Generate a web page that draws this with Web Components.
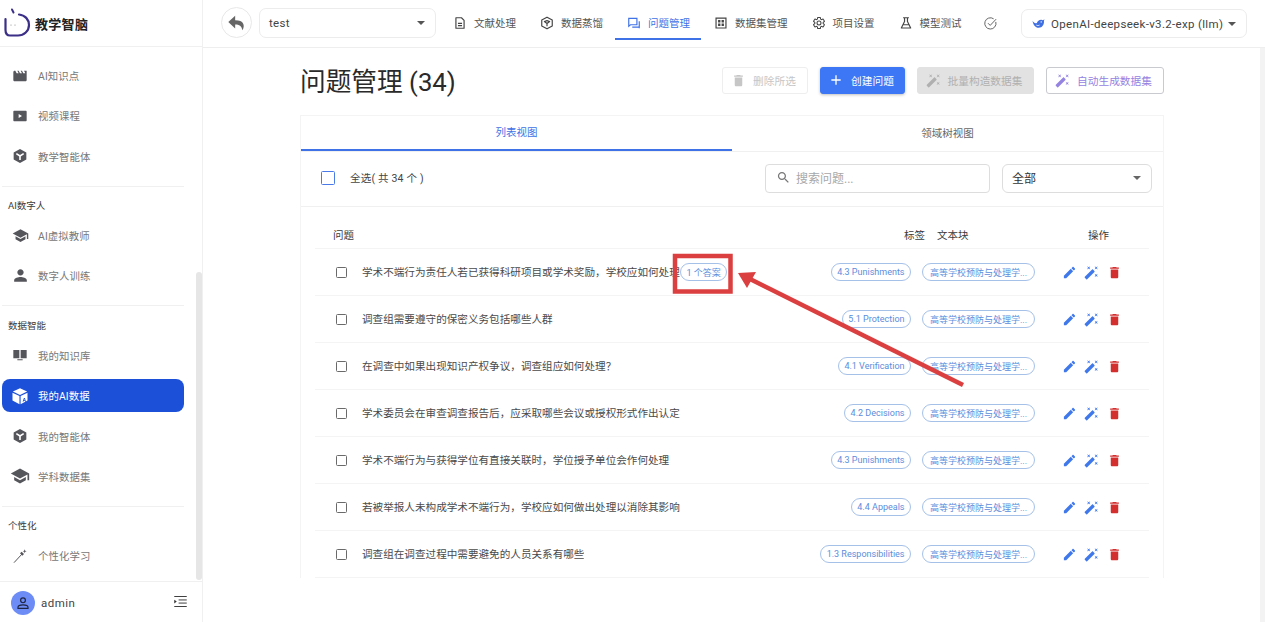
<!DOCTYPE html>
<html lang="zh">
<head>
<meta charset="utf-8">
<title>问题管理</title>
<style>
  html, body { margin: 0; height: 100%; overflow: hidden; background: #fff; }
  body { font-family: Roboto, "Noto Sans CJK SC", sans-serif; color: #2b2b2b; }
</style>
</head>
<body>
<app-shell>
  <side-bar slot="side"></side-bar>
  <top-bar slot="top"></top-bar>
  <question-page slot="main"></question-page>
</app-shell>
<red-marks></red-marks>

<script>
// all icons in one place, 24x24 box
const ICONS = {
  clap: '<path fill="currentColor" d="M18 4l2 4h-3l-2-4h-2l2 4h-3l-2-4H8l2 4H7L5 4H4c-1.1 0-2 .9-2 2v12c0 1.100.9 2 2 2h16c1.100 0 2-.9 2-2V4z"/>',
  video: '<path fill="currentColor" fill-rule="evenodd" d="M3.500 4h17c.8 0 1.500.7 1.500 1.500v13c0 .8-.7 1.500-1.500 1.500h-17C2.700 20 2 19.300 2 18.500v-13C2 4.700 2.700 4 3.500 4zM10 9v6l5-3z"/>',
  agent: '<path fill="currentColor" d="M12 1.500l9.500 5.300v10.400L12 22.500l-9.500-5.300V6.800z"/><path fill="none" stroke="#fff" stroke-width="2.400" d="M6.500 8.500L12 12l5.500-3.500M12 12v6"/>',
  school: '<path fill="currentColor" d="M5 13.180v4L12 21l7-3.820v-4L12 17l-7-3.820zM12 3L1 9l11 6 9-4.910V17h2V9L12 3z"/>',
  person: '<path fill="currentColor" d="M12 12c2.210 0 4-1.790 4-4s-1.790-4-4-4-4 1.790-4 4 1.790 4 4 4zm0 2c-2.670 0-8 1.340-8 4v2h16v-2c0-2.660-5.330-4-8-4z"/>',
  book: '<path fill="currentColor" d="M2 4.500h9V17H2zM13 4.500h9V17h-9zM8 18.500h8V20H8z"/>',
  cube: '<path fill="#fff" d="M12 1.500l9.500 4.600L12 10.800 2.500 6.100zM2 7.500l9.300 4.600V23L2 18zM12.800 12.100L22 7.500V18l-9.200 5z"/><path fill="#1c50d8" d="M15.500 19.500l1.700-5h1.300l1.500 5h-1.200l-.3-1h-1.700l-.3 1zm1.800-2h1.100l-.5-1.700z"/>',
  wandThin: '<path fill="none" stroke="currentColor" stroke-width="1.500" d="M3 22L16 8"/><path fill="currentColor" d="M14.500 5.500l3.500 3.500-2.500 2.500L12 8zM19 2l.8 2.200L22 5l-2.200.8L19 8l-.8-2.200L16 5l2.200-.8z"/>',
  wand: '<path fill="currentColor" d="M7.500 5.600L10 7 8.600 4.500 10 2 7.500 3.400 5 2l1.400 2.500L5 7zm12 9.800L17 14l1.400 2.500L17 19l2.500-1.400L22 19l-1.400-2.500L22 14zM22 2l-2.500 1.400L17 2l1.400 2.500L17 7l2.500-1.400L22 7l-1.400-2.500zm-7.630 5.290c-.39-.39-1.020-.39-1.410 0L1.290 18.960c-.39.39-.39 1.020 0 1.410l2.340 2.340c.39.39 1.020.39 1.410 0L16.700 11.050c.39-.39.39-1.020 0-1.410l-2.330-2.350z"/>',
  edit: '<path fill="currentColor" d="M3 17.250V21h3.750L17.810 9.940l-3.750-3.750L3 17.250zM20.710 7.040c.39-.39.39-1.020 0-1.410l-2.340-2.340c-.39-.39-1.020-.39-1.410 0l-1.830 1.830 3.750 3.750 1.830-1.830z"/>',
  trash: '<path fill="currentColor" d="M6 19c0 1.100.9 2 2 2h8c1.100 0 2-.9 2-2V7H6v12zM19 4h-3.500l-1-1h-5l-1 1H5v2h14V4z"/>',
  search: '<path fill="currentColor" d="M15.500 14h-.79l-.28-.27C15.410 12.590 16 11.110 16 9.500 16 5.910 13.090 3 9.500 3S3 5.910 3 9.500 5.910 16 9.500 16c1.610 0 3.090-.59 4.230-1.570l.27.28v.79l5 4.990L20.490 19l-4.990-5zm-6 0C7.010 14 5 11.990 5 9.500S7.010 5 9.500 5 14 7.010 14 9.500 11.990 14 9.500 14z"/>',
  add: '<path fill="currentColor" d="M19 13h-6v6h-2v-6H5v-2h6V5h2v6h6v2z"/>',
  back: '<path fill="currentColor" d="M10 9V4L2.500 11 10 18v-4.500c4.500 0 7 1.500 8 6.500 3-5.500 1.500-11-8-11z"/>',
  doc: '<path fill="none" stroke="currentColor" stroke-width="2" stroke-linejoin="round" d="M5 3h9.500L19 7.500V21H5z"/><path fill="none" stroke="currentColor" stroke-width="2" d="M8.500 12.500h7M8.500 16.500h7"/>',
  distill: '<path fill="none" stroke="currentColor" stroke-width="2" stroke-linejoin="round" d="M12 2l9 5v10l-9 5-9-5V7z"/><path fill="none" stroke="currentColor" stroke-width="2" stroke-linejoin="round" d="M7.500 9.500L12 8l4.500 1.500L12 13zM12 13v4.500"/>',
  chat: '<path fill="none" stroke="currentColor" stroke-width="2" d="M3 4h14v11H6l-3 2.500z"/><path fill="none" stroke="currentColor" stroke-width="2" d="M21 9v12M9 19h12"/>',
  grid: '<path fill="none" stroke="currentColor" stroke-width="2" d="M3.500 3.500h17v17h-17z"/><path fill="currentColor" d="M7 7h4v4H7zM13 7h4v4h-4zM7 13h4v4H7zM13 13h4v4h-4z"/>',
  gear: '<path fill="none" stroke="currentColor" stroke-width="1.800" d="M19.140 12.940c.04-.3.06-.61.06-.94 0-.32-.02-.64-.07-.94l2.030-1.580c.18-.14.23-.41.12-.61l-1.920-3.320c-.12-.22-.37-.29-.59-.22l-2.390.96c-.5-.38-1.030-.7-1.620-.94l-.36-2.540c-.04-.24-.24-.41-.48-.41h-3.840c-.24 0-.43.17-.47.41l-.36 2.540c-.59.24-1.130.57-1.620.94l-2.390-.96c-.22-.08-.47 0-.59.22L2.740 8.870c-.12.21-.08.47.12.61l2.030 1.580c-.05.3-.09.63-.09.94s.02.64.07.94l-2.030 1.580c-.18.14-.23.41-.12.61l1.920 3.320c.12.22.37.29.59.22l2.390-.96c.5.38 1.030.7 1.620.94l.36 2.540c.05.24.24.41.48.41h3.840c.24 0 .44-.17.47-.41l.36-2.540c.59-.24 1.130-.56 1.620-.94l2.390.96c.22.08.47 0 .59-.22l1.920-3.320c.12-.22.07-.47-.12-.61z"/><circle cx="12" cy="12" r="3.400" fill="none" stroke="currentColor" stroke-width="1.800"/>',
  flask: '<path fill="none" stroke="currentColor" stroke-width="2" stroke-linejoin="round" d="M7 3h10M9.500 3v6.500L4 20.500h16L14.500 9.500V3M7 15h10"/>',
  check: '<path fill="none" stroke="currentColor" stroke-width="1.600" d="M20.500 9.500A9 9 0 1 1 17 4.500"/><path fill="none" stroke="currentColor" stroke-width="1.600" d="M8 11.500l3.500 3.500L21 5"/>',
  whale: '<path fill="#3f6fe0" d="M1 7c2 4 5 5 8 4 1-3 4-6 8-6 1.200 0 2.300.4 3.200 1L23 4l-1 3.500c1 5.500-3 12.500-9.500 12.500C6 20 2 14 1 7z"/><circle cx="17" cy="9" r="1.300" fill="#fff"/><path fill="none" stroke="#fff" stroke-width="1.500" d="M8 15c2 1 4 1 6 0"/>',
  user: '<circle cx="12" cy="8" r="3.600" fill="none" stroke="#1f2540" stroke-width="1.800"/><path fill="none" stroke="#1f2540" stroke-width="1.800" d="M4.500 20v-1.500c0-2.500 3.500-3.700 7.500-3.700s7.500 1.200 7.500 3.700V20z"/>',
  collapse: '<path fill="none" stroke="currentColor" stroke-width="1.500" d="M2 4h20M9 9.500h13M9 14.500h13M2 20h20"/><path fill="currentColor" d="M2 9l4 3-4 3z"/>'
};

class UiIcon extends HTMLElement {
  connectedCallback() {
    const size = this.getAttribute('size') || 16;
    this.attachShadow({ mode: 'open' }).innerHTML = `
      <style>:host{display:inline-flex;flex:none;width:${size}px;height:${size}px} svg{width:100%;height:100%;display:block}</style>
      <svg viewBox="0 0 24 24">${ICONS[this.getAttribute('name')] || ''}</svg>`;
  }
}
customElements.define('ui-icon', UiIcon);

class AppShell extends HTMLElement {
  constructor() {
    super();
    this.attachShadow({ mode: 'open' }).innerHTML = `
      <style>
        :host{display:grid;grid-template-columns:203px 1fr;grid-template-rows:48px 1fr;height:622px;overflow:hidden}
        .side{grid-row:1 / 3;min-height:0;display:flex}
        .top{min-width:0}
        .main{min-height:0;overflow:hidden;position:relative}
        /* page scrollbar, very faint */
        .main::after{content:"";position:absolute;top:0;right:0;bottom:0;width:5px;background:#f3f3f3}
      </style>
      <div class="side"><slot name="side"></slot></div>
      <div class="top"><slot name="top"></slot></div>
      <div class="main"><slot name="main"></slot></div>`;
  }
}
customElements.define('app-shell', AppShell);

class NavItem extends HTMLElement {
  connectedCallback() {
    const on = this.hasAttribute('active');
    this.attachShadow({ mode: 'open' }).innerHTML = `
      <style>
        :host{display:flex;align-items:center;height:33px;margin-bottom:7.4px;border-radius:8px;
          padding-left:10px;font-size:10.4px;letter-spacing:.1px;
          color:${on ? '#fff' : '#777'};background:${on ? '#1c50d8' : 'transparent'}}
        .ic{display:flex;width:16px;justify-content:center;margin-right:10px;color:${on ? '#fff' : '#55555c'}}
      </style>
      <span class="ic"><ui-icon name="${this.getAttribute('icon')}" size="${this.getAttribute('size') || 16}"></ui-icon></span>
      <slot></slot>`;
  }
}
customElements.define('nav-item', NavItem);

class NavGroup extends HTMLElement {
  connectedCallback() {
    const label = this.getAttribute('label');
    const last = this.hasAttribute('last');
    this.attachShadow({ mode: 'open' }).innerHTML = `
      <style>
        :host{display:block}
        .label{font-size:9.500px;line-height:12px;color:#3a3a3a;padding-left:6px;margin-bottom:7px}
        hr{border:0;border-top:1px solid #f0f0f0;margin:13px 0 13.300px}
      </style>
      ${label ? `<div class="label">${label}</div>` : ''}
      <slot></slot>
      ${last ? '' : '<hr>'}`;
  }
}
customElements.define('nav-group', NavGroup);

class SideBar extends HTMLElement {
  constructor() {
    super();
    this.attachShadow({ mode: 'open' }).innerHTML = `
      <style>
        :host{display:flex;flex-direction:column;width:203px;height:622px;box-sizing:border-box;border-right:1px solid #f0f0f0;position:relative}
        .logo{height:47px;flex:none;box-sizing:border-box;border-bottom:1px solid #f0f0f0;display:flex;align-items:center;padding-left:2px;
          font-size:13px;font-weight:700;color:#222;letter-spacing:.3px}
        .logo svg{width:29px;height:30px;margin-right:4px;margin-top:-1px}
        nav{flex:1;padding:12px 18px 0 2px;overflow:hidden}
        .thumb{position:absolute;left:196px;top:272px;width:6px;height:308px;background:#e6e6e6;border-radius:3px}
        footer{height:41px;flex:none;box-sizing:border-box;padding:1px 14px 0 11px;border-top:1px solid #f0f0f0;display:flex;align-items:center;
          font-size:11.500px;letter-spacing:.5px;color:#444;background:#fff;position:relative}
        .av{width:24px;height:24px;border-radius:50%;background:#6d8cf6;display:flex;align-items:center;justify-content:center;margin-right:6px}
        .col{margin-left:auto;color:#333}
      </style>
      <div class="logo">
        <svg viewBox="0 0 29 30">
          <path fill="none" stroke="#3b2f88" stroke-width="2.200" stroke-linecap="round" d="M17 6.500C23 7 27 11.500 27 17c0 6-5 10.500-11 10.500H8C5 27.500 3.500 25 3.500 22V11"/>
          <path fill="none" stroke="#3b2f88" stroke-width="2" stroke-linecap="round" d="M10 1.500l1.500 3"/>
          <circle cx="9" cy="17" r=".6" fill="#888"/><circle cx="13" cy="17" r=".6" fill="#888"/>
        </svg>教学智脑
      </div>
      <nav>
        <nav-group>
          <nav-item icon="clap">AI知识点</nav-item>
          <nav-item icon="video">视频课程</nav-item>
          <nav-item icon="agent">教学智能体</nav-item>
        </nav-group>
        <nav-group label="AI数字人">
          <nav-item icon="school" size="17">AI虚拟教师</nav-item>
          <nav-item icon="person" size="19">数字人训练</nav-item>
        </nav-group>
        <nav-group label="数据智能">
          <nav-item icon="book">我的知识库</nav-item>
          <nav-item icon="cube" size="18" active>我的AI数据</nav-item>
          <nav-item icon="agent">我的智能体</nav-item>
          <nav-item icon="school" size="20">学科数据集</nav-item>
        </nav-group>
        <nav-group label="个性化" last>
          <nav-item icon="wandThin">个性化学习</nav-item>
        </nav-group>
      </nav>
      <div class="thumb"></div>
      <footer>
        <span class="av"><ui-icon name="user" size="16"></ui-icon></span>admin
        <span class="col"><ui-icon name="collapse" size="15"></ui-icon></span>
      </footer>`;
  }
}
customElements.define('side-bar', SideBar);

class TopTab extends HTMLElement {
  connectedCallback() {
    const on = this.hasAttribute('active');
    this.attachShadow({ mode: 'open' }).innerHTML = `
      <style>
        :host{display:flex;align-items:center;height:33px;margin-top:7px;padding:0 11px 0 12px;margin-right:1px;box-sizing:border-box;
          font-size:10.500px;color:${on ? '#3f72e6' : '#555'};border-bottom:2px solid ${on ? '#3f72e6' : 'transparent'}}
        ui-icon{margin-right:7px;color:${on ? '#3f72e6' : '#444'}}
      </style>
      <ui-icon name="${this.getAttribute('icon')}" size="14"></ui-icon><slot></slot>`;
  }
}
customElements.define('top-tab', TopTab);

class TopBar extends HTMLElement {
  constructor() {
    super();
    this.attachShadow({ mode: 'open' }).innerHTML = `
      <style>
        :host{display:flex;align-items:flex-start;height:48px;box-sizing:border-box;border-bottom:1px solid #eee;padding:0 18px;color:#444}
        .back{flex:none;width:31px;height:31px;border:1px solid #e8e8e8;border-radius:50%;box-sizing:border-box;margin-top:7px;margin-right:7px;display:flex;align-items:center;justify-content:center;color:#666}
        .sel{flex:none;width:177px;height:30px;margin-top:8px;margin-right:5px;box-sizing:border-box;border:1px solid #ececec;border-radius:7px;display:flex;align-items:center;padding:0 10px 0 9px;font-size:11.500px;letter-spacing:.3px;color:#444}
        .caret{margin-left:auto;width:0;height:0;border:4px solid transparent;border-top:4.500px solid #555;border-bottom:0}
        .chk{margin:16px 0 0 9px;color:#666}
        .model{margin-left:auto;width:226px;height:29px;margin-top:9px;box-sizing:border-box;border:1px solid #ececec;border-radius:7px;display:flex;align-items:center;padding:0 10px;font-size:11.500px;letter-spacing:.33px;color:#444;white-space:nowrap}
        .model ui-icon{margin-right:6px}
      </style>
      <span class="back"><ui-icon name="back" size="22"></ui-icon></span>
      <span class="sel">test<i class="caret"></i></span>
      <top-tab icon="doc">文献处理</top-tab>
      <top-tab icon="distill">数据蒸馏</top-tab>
      <top-tab icon="chat" active>问题管理</top-tab>
      <top-tab icon="grid">数据集管理</top-tab>
      <top-tab icon="gear">项目设置</top-tab>
      <top-tab icon="flask">模型测试</top-tab>
      <ui-icon class="chk" name="check" size="15"></ui-icon>
      <span class="model"><ui-icon name="whale" size="13"></ui-icon>OpenAI-deepseek-v3.2-exp (llm)<i class="caret"></i></span>`;
  }
}
customElements.define('top-bar', TopBar);

class ActionBtn extends HTMLElement {
  connectedCallback() {
    const kind = this.getAttribute('kind');
    const look = {
      disabledOutline: 'color:#c6c6c6;border:1px solid #eeeeee;background:#fff',
      primary: 'color:#fff;border:1px solid #3d77f5;background:#3d77f5;box-shadow:0 1px 3px rgba(0,0,0,.25)',
      disabled: 'color:#b0b0b0;border:1px solid #e2e2e2;background:#e2e2e2',
      outline: 'color:#9583e2;border:1px solid #c9c9d0;background:#fff'
    }[kind];
    this.attachShadow({ mode: 'open' }).innerHTML = `
      <style>
        :host{display:inline-flex;align-items:center;justify-content:center;height:27px;box-sizing:border-box;border-radius:3px;
          padding:0 3px 1px 0;font-size:10.700px;width:${this.getAttribute('w')}px;${look}}
        ui-icon{margin-right:7px}
      </style>
      <ui-icon name="${this.getAttribute('icon')}" size="${this.getAttribute('size') || 15}"></ui-icon><slot></slot>`;
  }
}
customElements.define('action-btn', ActionBtn);

class PillTag extends HTMLElement {
  constructor() {
    super();
    this.attachShadow({ mode: 'open' }).innerHTML = `
      <style>
        :host{display:inline-flex;align-items:center;justify-content:center;height:18px;box-sizing:border-box;padding:0 5.500px;flex:none;
          border:1px solid #a5c1e8;border-radius:9px;background:#fff;font-size:9px;color:#5b8ddc;white-space:nowrap}
      </style><slot></slot>`;
  }
}
customElements.define('pill-tag', PillTag);

class TickBox extends HTMLElement {
  connectedCallback() {
    const big = this.hasAttribute('big');
    this.attachShadow({ mode: 'open' }).innerHTML = `
      <style>
        :host{display:block;flex:none;box-sizing:border-box;border-radius:1.500px;
          width:${big ? 14 : 11}px;height:${big ? 14 : 11}px;border:${big ? '1.500px solid #4a7ae8' : '1.200px solid #6a6a6a'}}
      </style>`;
  }
}
customElements.define('tick-box', TickBox);

class QuestionRow extends HTMLElement {
  connectedCallback() {
    const answers = this.getAttribute('answers');
    this.attachShadow({ mode: 'open' }).innerHTML = `
      <style>
        :host{display:flex;align-items:center;height:47px;box-sizing:border-box;border-bottom:1.500px solid #f4f4f4;padding-left:21px;font-size:10.600px;color:#4a4a4a}
        .q{margin-left:15px;padding-bottom:1.500px;white-space:nowrap;overflow:hidden;${answers ? 'width:318px;flex:none' : ''}}
        .tag{margin-left:auto}
        .block{margin-left:11px;width:113px}
        .acts{display:flex;align-items:center;width:114px;padding-left:26.500px;box-sizing:border-box}
        .e{color:#3f78ea}.w{color:#3f78ea;margin-left:7px}.d{color:#d32f2f;margin-left:8px}
      </style>
      <tick-box></tick-box>
      <span class="q"><slot></slot></span>
      ${answers ? `<pill-tag>${answers}</pill-tag>` : ''}
      <pill-tag class="tag">${this.getAttribute('tag')}</pill-tag>
      <pill-tag class="block">高等学校预防与处理学...</pill-tag>
      <span class="acts">
        <ui-icon class="e" name="edit" size="15"></ui-icon>
        <ui-icon class="w" name="wand" size="15"></ui-icon>
        <ui-icon class="d" name="trash" size="15"></ui-icon>
      </span>`;
  }
}
customElements.define('question-row', QuestionRow);

class QuestionPage extends HTMLElement {
  constructor() {
    super();
    const rows = [
      ['学术不端行为责任人若已获得科研项目或学术奖励，学校应如何处理', '4.3 Punishments', '1 个答案'],
      ['调查组需要遵守的保密义务包括哪些人群', '5.1 Protection'],
      ['在调查中如果出现知识产权争议，调查组应如何处理？', '4.1 Verification'],
      ['学术委员会在审查调查报告后，应采取哪些会议或授权形式作出认定', '4.2 Decisions'],
      ['学术不端行为与获得学位有直接关联时，学位授予单位会作何处理', '4.3 Punishments'],
      ['若被举报人未构成学术不端行为，学校应如何做出处理以消除其影响', '4.4 Appeals'],
      ['调查组在调查过程中需要避免的人员关系有哪些', '1.3 Responsibilities']
    ];
    this.attachShadow({ mode: 'open' }).innerHTML = `
      <style>
        :host{display:block;padding:19px 0 0 97px;width:864px}
        .head{display:flex;align-items:center;height:27px;margin-bottom:21px}
        h1{font-size:25.700px;font-weight:400;margin:0 0 3px;color:#2a2a2a;letter-spacing:0}
        .btns{margin-left:auto;display:flex;gap:12px}
        .card{border:1px solid #f4f4f4;border-bottom:0}
        .tabs{display:grid;grid-template-columns:1fr 1fr;height:35px;font-size:10.500px;border-bottom:1px solid #f0f0f0}
        .tabs span{display:flex;align-items:center;justify-content:center;color:#666;padding-bottom:3px;box-sizing:border-box}
        .tabs .on{color:#3f72e6;border-bottom:2px solid #3f72e6;height:35px}
        .filter{display:flex;align-items:center;height:55px;box-sizing:border-box;border-bottom:1px solid #f0f0f0;padding:0 11px 2px 20px;font-size:10.500px;color:#444}
        .all{margin-left:15px;letter-spacing:.2px;padding-bottom:2px}
        .search{margin-left:auto;width:225px;height:29px;box-sizing:border-box;border:1px solid #ddd;border-radius:4px;display:flex;align-items:center;padding:0 0 1px 10px;color:#a8a8a8;font-size:12px}
        .search ui-icon{margin-right:5px;color:#777}
        .pick{margin-left:12px;width:150px;height:29px;box-sizing:border-box;border:1px solid #ddd;border-radius:6px;display:flex;align-items:center;padding:0 10px 1px 9px;font-size:12px;color:#333}
        .caret{margin-left:auto;width:0;height:0;border:4px solid transparent;border-top:4.500px solid #666;border-bottom:0}
        .table{padding:0 14px}
        .cols{display:flex;align-items:flex-end;height:42px;box-sizing:border-box;padding:0 0 5px 18px;font-size:10.500px;color:#3a3a3a;border-bottom:1.500px solid #f4f4f4;line-height:14px}
        .cols .t1{margin-left:auto}
        .cols .t2{margin-left:12px;width:32px}
        .cols .t3{margin-left:119px;width:61px;white-space:nowrap}
      </style>
      <div class="head">
        <h1>问题管理 (34)</h1>
        <div class="btns">
          <action-btn kind="disabledOutline" icon="trash" w="86">删除所选</action-btn>
          <action-btn kind="primary" icon="add" size="16" w="85">创建问题</action-btn>
          <action-btn kind="disabled" icon="wand" w="117">批量构造数据集</action-btn>
          <action-btn kind="outline" icon="wand" w="118">自动生成数据集</action-btn>
        </div>
      </div>
      <div class="card">
        <div class="tabs"><span class="on">列表视图</span><span>领域树视图</span></div>
        <div class="filter">
          <tick-box big></tick-box>
          <span class="all">全选( 共 34 个 )</span>
          <span class="search"><ui-icon name="search" size="15"></ui-icon>搜索问题...</span>
          <span class="pick">全部<i class="caret"></i></span>
        </div>
        <div class="table">
          <div class="cols"><span>问题</span><span class="t1">标签</span><span class="t2">文本块</span><span class="t3">操作</span></div>
          ${rows.map(r => `<question-row tag="${r[1]}"${r[2] ? ` answers="${r[2]}"` : ''}>${r[0]}</question-row>`).join('')}
        </div>
      </div>`;
  }
}
customElements.define('question-page', QuestionPage);

// the red box and arrow someone drew over the screenshot
class RedMarks extends HTMLElement {
  constructor() {
    super();
    this.attachShadow({ mode: 'open' }).innerHTML = `
      <style>
        :host{position:absolute;left:0;top:0;width:1265px;height:622px;pointer-events:none}
        svg{width:100%;height:100%;display:block}
      </style>
      <svg viewBox="0 0 1265 622">
        <rect x="675" y="256" width="55.500" height="35.500" fill="none" stroke="#dc3f3f" stroke-width="4.500"/>
        <path d="M963 385L750 279" stroke="#dc3f3f" stroke-width="4.500" fill="none"/>
        <path d="M738 273L756 272L747 288z" fill="#dc3f3f"/>
      </svg>`;
  }
}
customElements.define('red-marks', RedMarks);
</script>
</body>
</html>
